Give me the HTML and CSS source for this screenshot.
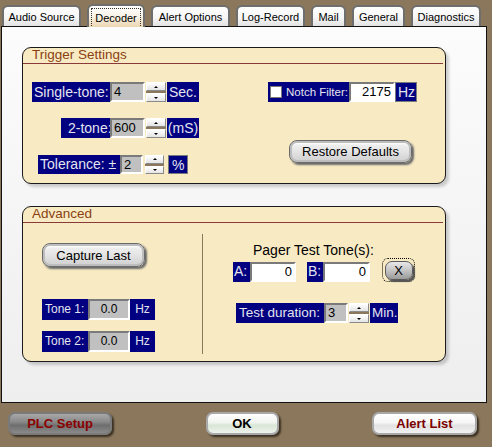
FILE: index.html
```html
<!DOCTYPE html>
<html>
<head>
<meta charset="utf-8">
<link rel="stylesheet" href="styles.css">
</head>
<body>
<div class="window">
  <div class="tabs">
    <div class="tab w79">Audio Source</div>
    <div class="tab w58 active"><span class="focus">Decoder</span></div>
    <div class="tab w79">Alert Options</div>
    <div class="tab w69">Log-Record</div>
    <div class="tab w35">Mail</div>
    <div class="tab w53">General</div>
    <div class="tab w70">Diagnostics</div>
  </div>
  <div class="panel">
    <div class="group trigger">
      <div class="group-title">Trigger Settings</div>
      <div class="trigger-body">
        <div class="col-left">
          <div class="row r1">
            <div class="lbl w78">Single-tone:</div>
            <div class="field gray w35">4</div>
            <div class="spin"><span class="up"></span><span class="down"></span></div>
            <div class="lbl unit w32">Sec.</div>
          </div>
          <div class="row r2">
            <div class="lbl w49">2-tone:</div>
            <div class="field gray w35">600</div>
            <div class="spin"><span class="up"></span><span class="down"></span></div>
            <div class="lbl unit w32 center">(mS)</div>
          </div>
          <div class="row r3">
            <div class="lbl w82">Tolerance: ±</div>
            <div class="field gray w23">2</div>
            <div class="spin s2"><span class="up"></span><span class="down"></span></div>
            <div class="lbl pct">%</div>
          </div>
        </div>
        <div class="col-right">
          <div class="row">
            <div class="lbl w81 notch"><span class="check"></span>Notch Filter:</div>
            <div class="field white w46 right">2175</div>
            <div class="lbl w22 hz">Hz</div>
          </div>
          <div class="btn restore">Restore Defaults</div>
        </div>
      </div>
    </div>
    <div class="group advanced">
      <div class="group-title">Advanced</div>
      <div class="adv-body">
        <div class="adv-left">
          <div class="btn capture">Capture Last</div>
          <div class="row small t1">
            <div class="lbl w46">Tone 1:</div>
            <div class="field gray w42 center">0.0</div>
            <div class="lbl w25 center">Hz</div>
          </div>
          <div class="row small t2">
            <div class="lbl w46">Tone 2:</div>
            <div class="field gray w42 center">0.0</div>
            <div class="lbl w25 center">Hz</div>
          </div>
        </div>
        <div class="sep"></div>
        <div class="adv-right">
          <div class="pager">Pager Test Tone(s):</div>
          <div class="row ab">
            <div class="lbl w17">A:</div>
            <div class="field white w46 right">0</div>
            <div class="lbl w16 bl">B:</div>
            <div class="field white w47 right">0</div>
            <div class="btn xbtn"><span>X</span></div>
          </div>
          <div class="row dur">
            <div class="lbl w88">Test duration:</div>
            <div class="field gray w24">3</div>
            <div class="spin"><span class="up"></span><span class="down"></span></div>
            <div class="lbl w28 unit">Min.</div>
          </div>
        </div>
      </div>
    </div>
  </div>
  <div class="bar">
    <div class="bbtn plc">PLC Setup</div>
    <div class="bbtn ok">OK</div>
    <div class="bbtn alert">Alert List</div>
  </div>
</div>
</body>
</html>
```

FILE: styles.css
```css
* { box-sizing: border-box; }
html, body { margin: 0; padding: 0; }
body {
  width: 492px;
  height: 447px;
  background: #8b785c;
  font-family: "Liberation Sans", Arial, sans-serif;
  overflow: hidden;
}
.window { padding-top: 5px; }

.tabs {
  display: flex;
  gap: 6px;
  padding-left: 2px;
  height: 21px;
  position: relative;
  z-index: 2;
  align-items: flex-end;
}
.tab {
  height: 21px;
  border: 2px solid #6e6e6e;
  border-bottom: none;
  border-radius: 6px 6px 0 0;
  background: linear-gradient(#ffffff 0%, #f6f6f6 55%, #e2e2e2 100%);
  font-size: 11px;
  color: #000;
  display: flex;
  align-items: center;
  justify-content: center;
  padding-top: 1px;
}
.tab.active {
  height: 23px;
  margin-bottom: -1px;
  background: linear-gradient(#ffffff 0%, #f8f2e6 50%, #ecd6b0 100%);
  padding: 2px 2px 1px;
}
.tab.active .focus {
  display: flex;
  align-items: center;
  justify-content: center;
  width: 100%;
  height: 100%;
  border: 1px dotted #333;
  border-bottom: none;
}
.w79 { width: 79px; }
.w58 { width: 58px; }
.w69 { width: 69px; }
.w35 { width: 35px; }
.w53 { width: 53px; }
.w70 { width: 70px; }

.panel {
  margin-left: 1px;
  width: 486px;
  height: 377px;
  border: 1px solid #111;
  background: linear-gradient(#fcfcfc 0%, #f5f5f5 50%, #eeeeee 100%);
  padding: 20px 0 0 20px;
}

.group {
  width: 424px;
  border: 1px solid #1a1a1a;
  border-radius: 9px;
  background: #f8ebc4;
  box-shadow: 3px 3px 3px rgba(0, 0, 0, 0.18);
}
.trigger { height: 137px; }
.advanced { height: 156px; margin-top: 22px; }
.group-title {
  height: 16px;
  border-bottom: 1px solid #8b3a3a;
  margin-right: 2px;
  padding-left: 9px;
  font-size: 13.5px;
  line-height: 14px;
  color: #8a4212;
}

.row { display: flex; align-items: stretch; height: 20px; }
.lbl {
  background: #000080;
  color: #e4e4ee;
  font-size: 14px;
  line-height: 20px;
  white-space: nowrap;
  padding-left: 2px;
  flex-shrink: 0;
}
.lbl.center { text-align: center; padding-left: 0; }
.field {
  border: 2px solid;
  border-color: #7a7a7a #ffffff #ffffff #7a7a7a;
  font-size: 13px;
  line-height: 16px;
  color: #000;
  padding-left: 2px;
  flex-shrink: 0;
}
.field.gray { background: #c0c0c0; }
.field.white { background: #fff; }
.field.right { text-align: right; padding-right: 2px; }
.field.center { text-align: center; padding-left: 0; }

.spin {
  width: 20px;
  margin-left: 1px;
  display: flex;
  flex-direction: column;
  gap: 2px;
  background: #8b785c;
  flex-shrink: 0;
}
.spin.s2 { margin-left: 2px; width: 19px; }
.spin span {
  flex: 1;
  background: linear-gradient(#ffffff, #e4e4e4);
  border: 1px solid;
  border-color: #ffffff #8a8a8a #8a8a8a #ffffff;
  position: relative;
}
.spin span::after {
  content: "";
  position: absolute;
  left: 50%;
  top: 50%;
  margin-left: -2px;
  border-left: 2px solid transparent;
  border-right: 2px solid transparent;
}
.spin .up::after { border-bottom: 2px solid #000; margin-top: -1px; }
.spin .down::after { border-top: 2px solid #000; margin-top: -1px; }
.unit { margin-left: 1px; }

.trigger-body { display: flex; padding: 18px 0 0 9px; }
.col-left { width: 236px; }
.r2 { margin-top: 16px; margin-left: 29px; }
.r3 { margin-top: 17px; margin-left: 6px; height: 19px; }
.r3 .lbl { line-height: 19px; }
.w78 { width: 78px; }
.w32 { width: 32px; }
.w49 { width: 49px; padding-left: 7px; }
.w82 { width: 82px; }
.w23 { width: 23px; }
.pct {
  width: 20px;
  margin-left: 4px;
  border: 1px solid #7a7a7a;
  line-height: 17px;
  padding-left: 3px;
}
.w81 { width: 81px; }
.w46 { width: 46px; }
.w47 { width: 47px; }
.w22 { width: 22px; }
.notch { display: flex; align-items: center; font-size: 11.5px; padding-left: 2px; }
.check {
  flex-shrink: 0;
  width: 12px;
  height: 12px;
  background: #fff;
  border: 1px solid #7a7a7a;
  margin: 0 4px 0 0;
}
.hz { border: 1px solid #7a7a7a; line-height: 18px; font-size: 14px; }

.btn {
  display: flex;
  align-items: center;
  justify-content: center;
  border: 1px solid #6a6a6a;
  border-radius: 8px;
  background: linear-gradient(#f4f4f4 0%, #e6e6e6 45%, #cfcfcf 100%);
  box-shadow: inset 0 0 0 2px #bdbdbd, inset 0 3px 2px #fff, 2px 2px 2px #6a6a6a;
  font-size: 13px;
  color: #000;
}
.restore { width: 123px; height: 23px; margin: 38px 0 0 21px; }

.adv-body { display: flex; }
.adv-left { width: 179px; padding: 20px 0 0 19px; }
.capture { width: 103px; height: 24px; }
.small .lbl { font-size: 12px; }
.w42 { width: 42px; }
.w25 { width: 25px; }
.w17 { width: 17px; padding-left: 1px; }
.w16 { width: 16px; padding-left: 1px; }
.w88 { width: 88px; padding-left: 3px; }
.w24 { width: 24px; }
.w28 { width: 28px; }
.small .field { font-size: 12px; }
.t1 { margin-top: 32px; height: 21px; }
.t1 .lbl { line-height: 21px; }
.t2 { margin-top: 11px; height: 21px; }
.t2 .lbl { line-height: 21px; }
.t1 .lbl:first-child, .t2 .lbl:first-child { padding-left: 3px; }

.sep { width: 1px; height: 120px; margin-top: 11px; background: #8b785c; }

.adv-right { padding: 19px 0 0 0; flex: 1; }
.pager {
  margin-left: 50px;
  font-size: 14px;
  line-height: 16px;
  height: 16px;
  color: #000;
}
.ab { margin-left: 30px; height: 24px; align-items: flex-end; }
.ab .lbl, .ab .field { height: 20px; }
.ab .lbl { line-height: 18px; font-size: 14px; }
.bl { margin-left: 11px; }
.xbtn {
  width: 33px;
  height: 24px;
  margin-left: 12px;
  padding: 1px;
  border: 1px dotted #000;
  border-radius: 6px;
  background: transparent;
  box-shadow: none;
}
.xbtn span {
  display: flex;
  align-items: center;
  justify-content: center;
  width: 28px;
  height: 19px;
  border-radius: 7px;
  border: 1px solid #5a5a5a;
  background: linear-gradient(#e8e8e8 0%, #c4c4c4 50%, #9a9a9a 100%);
  box-shadow: 2px 2px 1px #555;
  font-size: 13px;
}
.dur { margin-top: 21px; margin-left: 33px; }
.dur .lbl { font-size: 13.5px; }

.bar {
  display: flex;
  justify-content: space-between;
  padding: 0 15px 0 8px;
  margin-top: 9px;
}
.bbtn {
  height: 23px;
  border: 2px solid #9a9a9a;
  border-radius: 7px;
  display: flex;
  align-items: center;
  justify-content: center;
  font-weight: bold;
  font-size: 13px;
  box-shadow: 2px 2px 2px #3a3022;
}
.plc {
  width: 104px;
  color: #8b0000;
  background: linear-gradient(#a8a8a8 0%, #8a8a8a 40%, #6e6e6e 60%, #8a8a8a 100%);
  border-color: #7a7a7a;
}
.ok {
  width: 73px;
  color: #000;
  background: linear-gradient(#ffffff 0%, #f0f4ee 45%, #d8e6d6 60%, #eef2ec 100%);
  border-color: #a8a8a8;
}
.alert {
  width: 105px;
  color: #7a0000;
  background: linear-gradient(#ffffff 0%, #f6f6f6 45%, #e2e2e2 60%, #f2f2f2 100%);
  border-color: #a8a8a8;
}
```
